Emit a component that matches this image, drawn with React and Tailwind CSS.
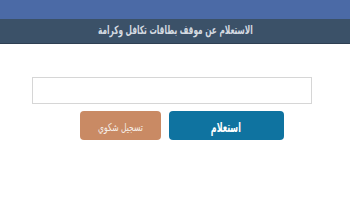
import React from 'react';

const App = () => {
    return (
        <div dir="rtl" className="w-[350px] h-[200px] bg-white overflow-hidden" style={{ fontFamily: '"DejaVu Sans", sans-serif' }}>
            {/* Top bars */}
            <div className="h-[19px] bg-[#4b6aa6]" />
            <div className="h-[25px] bg-[#3b5168] border-b border-[#2e3f52] flex items-center justify-center">
                <span className="inline-block text-[9px] font-bold text-[#d5dbe2] scale-x-[0.82] scale-y-[1.3]">الاستعلام عن موقف بطاقات تكافل وكرامة</span>
            </div>

            {/* Form */}
            <div className="pt-[33px] flex flex-col items-center">
                <input
                    type="text"
                    className="w-[280px] h-[27px] mr-[6px] border border-[#d6d6d6] bg-white outline-none"
                />
                <div className="mt-[7px] flex gap-[8px] ml-[13px]">
                    <button className="w-[115px] h-[29px] rounded-[4px] bg-[#0f73a0] text-white">
                        <span className="inline-block text-[11px] font-bold scale-x-[0.72] scale-y-[1.25]">استعلام</span>
                    </button>
                    <button className="w-[81px] h-[29px] rounded-[4px] bg-[#c98a64] text-[#f6efe9]">
                        <span className="inline-block text-[9px] scale-x-[0.85] scale-y-[1.2]">تسجيل شكوي</span>
                    </button>
                </div>
            </div>
        </div>
    );
};

export default App;
